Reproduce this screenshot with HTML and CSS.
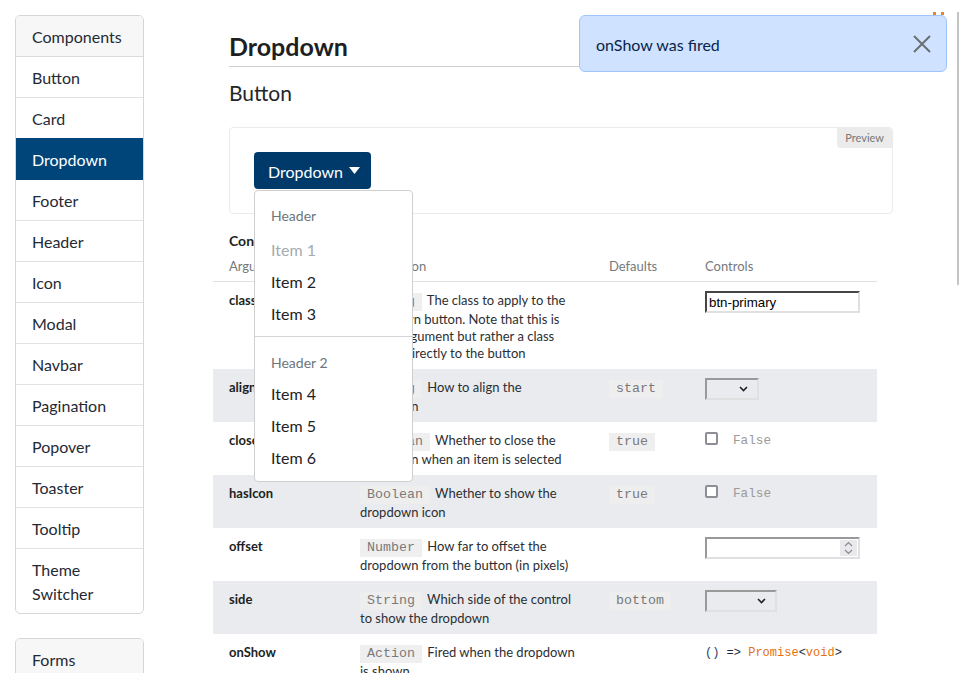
FILE: index.html
```html
<!DOCTYPE html>
<html lang="en">
<head>
<meta charset="utf-8">
<title>Dropdown</title>
<link rel="stylesheet" href="styles.css">
</head>
<body>
<div class="layout">
  <aside class="sidebar">
    <div class="list-card">
      <div class="list-head">Components</div>
      <a class="list-item">Button</a>
      <a class="list-item">Card</a>
      <a class="list-item active">Dropdown</a>
      <a class="list-item">Footer</a>
      <a class="list-item">Header</a>
      <a class="list-item">Icon</a>
      <a class="list-item">Modal</a>
      <a class="list-item">Navbar</a>
      <a class="list-item">Pagination</a>
      <a class="list-item">Popover</a>
      <a class="list-item">Toaster</a>
      <a class="list-item">Tooltip</a>
      <a class="list-item last">Theme Switcher</a>
    </div>
    <div class="list-card">
      <div class="list-head">Forms</div>
      <a class="list-item">Checkbox</a>
    </div>
  </aside>

  <main class="main">
    <h1 class="title">Dropdown</h1>
    <h2 class="subtitle">Button</h2>

    <section class="preview">
      <span class="preview-tag">Preview</span>
      <div class="dropdown">
        <button class="dd-btn">Dropdown
          <svg class="caret" width="11" height="7" viewBox="0 0 11 7"><path d="M0 0h11L5.5 7z" fill="#fff"/></svg>
        </button>
        <div class="dd-menu">
          <div class="dd-header">Header</div>
          <div class="dd-item disabled">Item 1</div>
          <div class="dd-item">Item 2</div>
          <div class="dd-item">Item 3</div>
          <div class="dd-divider"></div>
          <div class="dd-header second">Header 2</div>
          <div class="dd-item">Item 4</div>
          <div class="dd-item">Item 5</div>
          <div class="dd-item">Item 6</div>
        </div>
      </div>
    </section>

    <h3 class="controls-title">Controls</h3>
    <table class="args">
      <colgroup>
        <col class="c-name"><col class="c-desc"><col class="c-def"><col class="c-ctrl">
      </colgroup>
      <thead>
        <tr><th>Arguments</th><th>Description</th><th>Defaults</th><th>Controls</th></tr>
      </thead>
      <tbody>
        <tr>
          <td class="name">className</td>
          <td><code class="chip">String</code> The class to apply to the Dropdown button. Note that this is not an argument but rather a class applied directly to the button</td>
          <td></td>
          <td><input class="text-input" type="text" value="btn-primary"></td>
        </tr>
        <tr class="alt">
          <td class="name">align</td>
          <td><code class="chip">String</code> How to align the dropdown</td>
          <td><code class="chip">start</code></td>
          <td><span class="select s-align"><svg width="9" height="6" viewBox="0 0 9 6"><path d="M1 1l3.5 3.5L8 1" fill="none" stroke="#222" stroke-width="1.6"/></svg></span></td>
        </tr>
        <tr>
          <td class="name">closeOnSelect</td>
          <td><code class="chip">Boolean</code> Whether to close the dropdown when an item is selected</td>
          <td><code class="chip">true</code></td>
          <td><span class="check"><span class="box"></span><span class="false">False</span></span></td>
        </tr>
        <tr class="alt">
          <td class="name">hasIcon</td>
          <td><code class="chip">Boolean</code> Whether to show the dropdown icon</td>
          <td><code class="chip">true</code></td>
          <td><span class="check"><span class="box"></span><span class="false">False</span></span></td>
        </tr>
        <tr>
          <td class="name">offset</td>
          <td><code class="chip">Number</code> How far to offset the dropdown from the button (in pixels)</td>
          <td></td>
          <td><span class="number-input"><span class="spin"><svg width="9" height="14" viewBox="0 0 9 14"><path d="M1 5l3.5-3.5L8 5M1 9l3.5 3.5L8 9" fill="none" stroke="#888" stroke-width="1.1"/></svg></span></span></td>
        </tr>
        <tr class="alt">
          <td class="name">side</td>
          <td><code class="chip">String</code> Which side of the control to show the dropdown</td>
          <td><code class="chip">bottom</code></td>
          <td><span class="select s-side"><svg width="9" height="6" viewBox="0 0 9 6"><path d="M1 1l3.5 3.5L8 1" fill="none" stroke="#222" stroke-width="1.6"/></svg></span></td>
        </tr>
        <tr>
          <td class="name">onShow</td>
          <td><code class="chip">Action</code> Fired when the dropdown is shown</td>
          <td></td>
          <td><code class="sig"><span class="p">()</span> =&gt; <span class="o">Promise</span>&lt;<span class="o">void</span>&gt;</code></td>
        </tr>
      </tbody>
    </table>
  </main>
</div>

<span class="sun"></span>
<div class="toast">
  <span class="toast-text">onShow was fired</span>
  <svg class="toast-close" width="18" height="18" viewBox="0 0 18 18"><path d="M1 1l16 16M17 1L1 17" stroke="#6b6f73" stroke-width="2" fill="none"/></svg>
</div>
<span class="scroll-thumb"></span>
</body>
</html>
```
FILE: styles.css
```css
html, body {
  margin: 0;
  height: 100%;
  overflow: hidden;
  background: #fff;
}
body {
  font-family: Lato, "Noto Sans", sans-serif;
  color: #212529;
  font-size: 16px;
}
.layout {
  display: grid;
  grid-template-columns: 129px 680px;
  column-gap: 69px;
  padding: 15px;
  align-items: start;
}

/* sidebar */
.sidebar {
  display: flex;
  flex-direction: column;
  gap: 24px;
}
.list-card {
  border: 1px solid #d6d6d6;
  border-radius: 5px;
  overflow: hidden;
}
.list-head {
  background: #f7f7f7;
  padding: 9px 16px 7px;
  line-height: 24px;
  border-bottom: 1px solid #dcdcdc;
  color: #1f2a36;
}
.list-item {
  display: block;
  padding: 9px 16px 7px;
  line-height: 24px;
  border-bottom: 1px solid #e2e2e4;
  color: #1f2a36;
}
.list-item.last { border-bottom: 0; }
.list-item.active {
  background: #004579;
  color: #fff;
  border-bottom-color: #004579;
  margin-top: -1px;
  padding-top: 10px;
}

/* main */
.main {
  padding: 16px 0 0 16px;
}
.title {
  margin: 0;
  font-size: 25px;
  line-height: 29px;
  font-weight: 700;
  color: #1d1f22;
  padding: 1px 0 5px;
  border-bottom: 1px solid #cfcfcf;
}
.subtitle {
  margin: 14px 0 0;
  font-size: 21px;
  line-height: 24px;
  font-weight: 400;
  color: #22262a;
}
.preview {
  position: relative;
  margin-top: 22px;
  border: 1px solid #ebebeb;
  border-radius: 4px;
  padding: 24px;
  height: 37px;
}
.preview-tag {
  position: absolute;
  top: 0;
  right: 0;
  background: #ebebeb;
  color: #777;
  font-size: 11px;
  line-height: 20px;
  padding: 0 8px;
  border-radius: 0 4px 0 4px;
}
.dropdown {
  position: relative;
  display: inline-block;
}
.dd-btn {
  display: flex;
  align-items: center;
  gap: 6px;
  height: 37px;
  padding: 2px 11px 0 14px;
  border: 0;
  border-radius: 4px;
  background: #003a6b;
  color: #fff;
  font-family: inherit;
  font-size: 16px;
}
.caret { display: block; margin-top: -2px; }
.dd-menu {
  position: absolute;
  top: calc(100% + 1px);
  left: 0;
  width: 157px;
  background: #fff;
  border: 1px solid #cfcfcf;
  border-radius: 4px;
  padding: 9px 0 7px;
  z-index: 5;
}
.dd-header {
  padding: 6px 16px 8px;
  line-height: 20px;
  font-size: 14px;
  color: #6c757d;
}
.dd-header.second { padding: 9px 16px 5px; }
.dd-item {
  padding: 4px 16px;
  line-height: 24px;
  font-size: 16px;
  color: #1d2125;
}
.dd-item.disabled { color: #a6abb0; }
.dd-divider {
  height: 1px;
  background: #d4d4d4;
  margin: 6px 0 7px;
}

/* controls table */
.controls-title {
  margin: 18px 0 0;
  font-size: 14px;
  line-height: 17px;
  font-weight: 700;
  color: #1d1f22;
}
.args {
  margin-left: -16px;
  width: 664px;
  table-layout: fixed;
  border-collapse: collapse;
  font-size: 13px;
  line-height: 17px;
}
.c-name { width: 131px; }
.c-desc { width: 249px; }
.c-def { width: 96px; }
.c-ctrl { width: 188px; }
.args th {
  text-align: left;
  font-weight: 400;
  color: #76797c;
  padding: 9px 16px 6px;
  border-bottom: 1px solid #e0e0e0;
}
.args td {
  vertical-align: top;
  padding: 10px 16px 7px;
  color: #2b2f33;
}
.args tr.alt td { background: #e9ebee; }
.args td.name {
  font-weight: 700;
  color: #1d1f22;
}
.chip {
  display: inline-block;
  font-family: "Liberation Mono", monospace;
  font-size: 13.3px;
  line-height: 18px;
  padding: 0 7px;
  margin-right: 2px;
  background: #efefef;
  color: #7a7a7a;
}
.args tr.alt .chip { background: #eeeeee; }

.text-input {
  display: block;
  box-sizing: border-box;
  width: 155px;
  height: 22px;
  margin-top: -1px;
  border: 2px inset #d8d8d8;
  border-color: #999 #e0e0e0 #e0e0e0 #999;
  padding: 0 2px;
  font-family: "Liberation Sans", Arial, sans-serif;
  font-size: 13.3px;
  color: #000;
  background: #fff;
}
.select {
  display: flex;
  align-items: center;
  justify-content: flex-end;
  box-sizing: border-box;
  height: 22px;
  margin-top: -1px;
  border: 2px solid;
  border-color: #999 #e0e0e0 #e0e0e0 #999;
  padding-right: 9px;
  background: #e9ebee;
}
.s-align { width: 54px; }
.s-side { width: 72px; }
.check {
  display: flex;
  align-items: center;
  gap: 15px;
  margin-top: -4px;
}
.box {
  box-sizing: border-box;
  width: 13px;
  height: 13px;
  border: 2px solid #8e8e96;
  border-radius: 2px;
  background: #fff;
}
.false {
  font-family: "Liberation Mono", monospace;
  font-size: 12.7px;
  color: #9a9a9a;
  margin-top: 4px;
}
.number-input {
  display: flex;
  justify-content: flex-end;
  align-items: stretch;
  box-sizing: border-box;
  width: 155px;
  height: 22px;
  margin-top: -1px;
  border: 2px solid;
  border-color: #999 #e0e0e0 #e0e0e0 #999;
  background: #fff;
  padding: 1px;
}
.spin {
  display: flex;
  align-items: center;
  justify-content: center;
  width: 17px;
  background: #e9e9ed;
}
.sig {
  display: block;
  font-family: "Liberation Mono", monospace;
  font-size: 12px;
  color: #1e2a3a;
  line-height: 18px;
}
.sig .p { color: #1f3f66; }
.sig .o { color: #e5700f; }

/* overlay bits */
.toast {
  position: fixed;
  top: 15px;
  left: 579px;
  width: 368px;
  height: 57px;
  box-sizing: border-box;
  display: flex;
  align-items: center;
  justify-content: space-between;
  padding: 2px 15px 0 16px;
  background: #cfe2ff;
  border: 1px solid #9ec5fe;
  border-radius: 6px;
  color: #0a2449;
  font-size: 16px;
  z-index: 10;
}
.toast-close { display: block; margin-top: -2px; }
.sun {
  position: fixed;
  top: 12px;
  left: 933px;
  width: 11px;
  height: 11px;
  border-top: 3px dotted #e8832a;
  z-index: 1;
}
.scroll-thumb {
  position: fixed;
  top: 12px;
  left: 957px;
  width: 2px;
  height: 273px;
  background: #c4c4c4;
}
```
